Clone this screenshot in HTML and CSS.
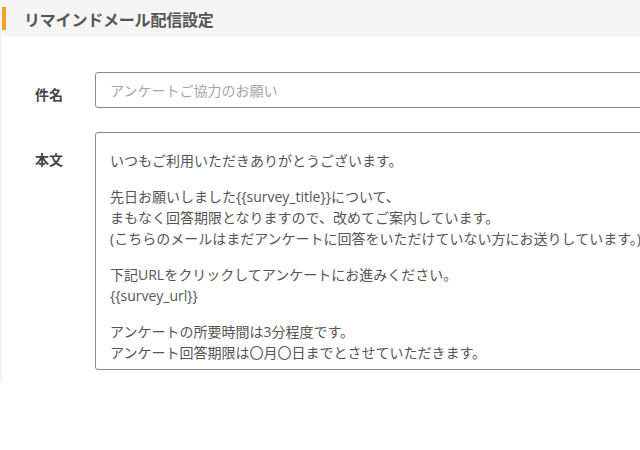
FILE: index.html
```html
<!DOCTYPE html>
<html lang="ja">
<head>
    <meta charset="UTF-8">
    <meta name="viewport" content="width=device-width, initial-scale=1.0">
    <title>リマインドメール配信設定</title>
    <link rel="stylesheet" href="styles.css">
</head>
<body>

    <div class="panel">
        <div class="panel-head">
            <h2>リマインドメール配信設定</h2>
        </div>

        <div class="form">
            <div class="form-row">
                <label class="form-label" for="subject">件名</label>
                <input id="subject" class="form-input" type="text" placeholder="アンケートご協力のお願い">
            </div>

            <div class="form-row">
                <label class="form-label form-label-body">本文</label>
                <div class="form-body">
                    <p>いつもご利用いただきありがとうございます。</p>
                    <p>先日お願いしました{{survey_title}}について、<br>
                    まもなく回答期限となりますので、改めてご案内しています。<br>
                    (こちらのメールはまだアンケートに回答をいただけていない方にお送りしています。)</p>
                    <p>下記URLをクリックしてアンケートにお進みください。<br>
                    {{survey_url}}</p>
                    <p>アンケートの所要時間は3分程度です。<br>
                    アンケート回答期限は〇月〇日までとさせていただきます。</p>
                </div>
            </div>
        </div>
    </div>

</body>
</html>
```

FILE: styles.css
```css
html {
    overflow: hidden;
}

body {
    margin: 0;
    font-family: 'Open Sans', 'Noto Sans CJK JP', sans-serif;
    background: #fff;
    color: #555;
}

.panel {
    min-height: 383px;
    border-left: 2px solid #f4f4f4;
}

.panel-head {
    display: flex;
    align-items: center;
    height: 37px;
    background-color: #f5f5f5;
}

.panel-head::before {
    content: '';
    width: 4px;
    height: 23px;
    margin-right: 18px;
    background-color: #efa12c;
}

.panel-head h2 {
    margin: 0;
    font-size: 16px;
    font-weight: 700;
    letter-spacing: -0.2px;
    color: #555;
}

.form {
    padding: 35px 0 0 33px;
}

.form-row {
    display: flex;
    align-items: flex-start;
    margin-bottom: 24px;
}

.form-label {
    flex: 0 0 60px;
    padding-top: 13px;
    font-size: 14px;
    line-height: 20px;
    font-weight: 700;
    color: #444;
}

.form-label-body {
    padding-top: 18px;
}

.form-input {
    flex: 0 0 620px;
    height: 36px;
    box-sizing: border-box;
    padding: 0 14px;
    border: 1px solid #8a8a8a;
    border-radius: 3px;
    font-family: inherit;
    font-size: 14px;
    color: #555;
}

.form-input::placeholder {
    color: #a6a6a6;
}

.form-body {
    flex: 0 0 620px;
    height: 238px;
    box-sizing: border-box;
    padding: 17px 14px 0;
    border: 1px solid #8a8a8a;
    border-radius: 3px;
    overflow: hidden;
    font-size: 14px;
    line-height: 21px;
    white-space: nowrap;
    color: #555;
}

.form-body p {
    margin: 0 0 15px;
}
```
